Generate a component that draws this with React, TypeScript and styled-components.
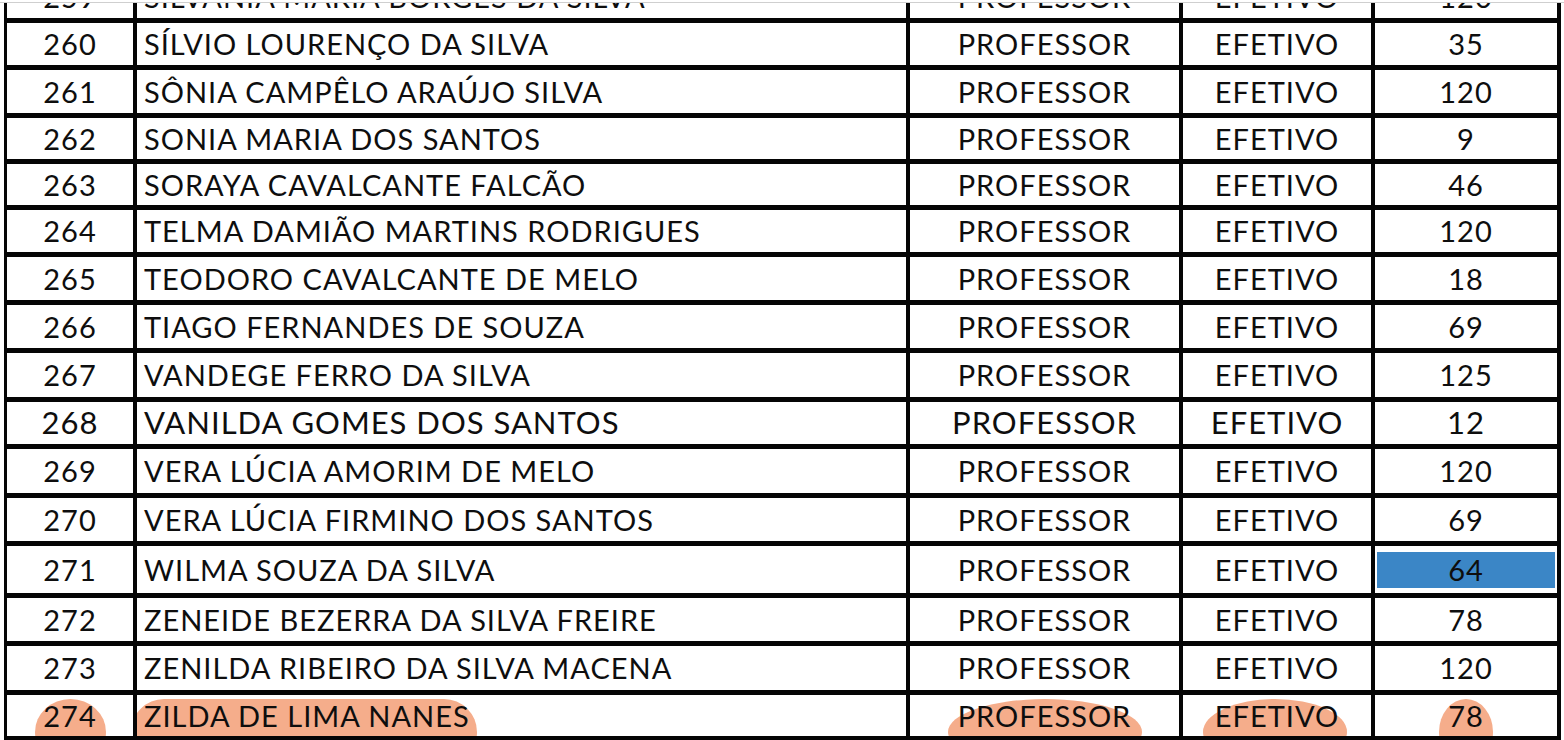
import styled, { createGlobalStyle } from 'styled-components';

const GlobalStyle = createGlobalStyle`
	html, body {
		margin: 0;
		padding: 0;
		background: #ffffff;
	}
	body {
		font-family: Lato, 'Open Sans', 'Liberation Sans', sans-serif;
	}
`;

type RowType = {
	id: string;
	name: string;
	role: string;
	kind: string;
	days: string;
	height: number;
	partial?: boolean;
	large?: boolean;
	filled?: boolean;
	marked?: boolean;
};

const rows: RowType[] = [
	{ id: '259', name: 'SILVANIA MARIA BORGES DA SILVA', role: 'PROFESSOR', kind: 'EFETIVO', days: '120', height: 15, partial: true },
	{ id: '260', name: 'SÍLVIO LOURENÇO DA SILVA', role: 'PROFESSOR', kind: 'EFETIVO', days: '35', height: 42 },
	{ id: '261', name: 'SÔNIA CAMPÊLO ARAÚJO SILVA', role: 'PROFESSOR', kind: 'EFETIVO', days: '120', height: 43 },
	{ id: '262', name: 'SONIA MARIA DOS SANTOS', role: 'PROFESSOR', kind: 'EFETIVO', days: '9', height: 41 },
	{ id: '263', name: 'SORAYA CAVALCANTE FALCÃO', role: 'PROFESSOR', kind: 'EFETIVO', days: '46', height: 41 },
	{ id: '264', name: 'TELMA DAMIÃO MARTINS RODRIGUES', role: 'PROFESSOR', kind: 'EFETIVO', days: '120', height: 42 },
	{ id: '265', name: 'TEODORO CAVALCANTE DE MELO', role: 'PROFESSOR', kind: 'EFETIVO', days: '18', height: 43 },
	{ id: '266', name: 'TIAGO FERNANDES DE SOUZA', role: 'PROFESSOR', kind: 'EFETIVO', days: '69', height: 43 },
	{ id: '267', name: 'VANDEGE FERRO DA SILVA', role: 'PROFESSOR', kind: 'EFETIVO', days: '125', height: 44 },
	{ id: '268', name: 'VANILDA GOMES DOS SANTOS', role: 'PROFESSOR', kind: 'EFETIVO', days: '12', height: 42, large: true },
	{ id: '269', name: 'VERA LÚCIA AMORIM DE MELO', role: 'PROFESSOR', kind: 'EFETIVO', days: '120', height: 44 },
	{ id: '270', name: 'VERA LÚCIA FIRMINO DOS SANTOS', role: 'PROFESSOR', kind: 'EFETIVO', days: '69', height: 43 },
	{ id: '271', name: 'WILMA SOUZA DA SILVA', role: 'PROFESSOR', kind: 'EFETIVO', days: '64', height: 47, filled: true },
	{ id: '272', name: 'ZENEIDE BEZERRA DA SILVA FREIRE', role: 'PROFESSOR', kind: 'EFETIVO', days: '78', height: 43 },
	{ id: '273', name: 'ZENILDA RIBEIRO DA SILVA MACENA', role: 'PROFESSOR', kind: 'EFETIVO', days: '120', height: 44 },
	{ id: '274', name: 'ZILDA DE LIMA NANES', role: 'PROFESSOR', kind: 'EFETIVO', days: '78', height: 41, marked: true },
];

// where the hand-drawn highlight sits inside each cell of the marked row
const marks = [
	{ left: 28, width: 71, round: '50%' },
	{ left: -6, width: 346, round: '36px' },
	{ left: 38, width: 194, round: '50%' },
	{ left: 20, width: 144, round: '50%' },
	{ left: 64, width: 54, round: '50%' },
];

const Page = styled.div`
	padding-top: 2px;
`;

const TopRule = styled.div`
	height: 1px;
	background: #cfcfcf;
`;

const Sheet = styled.div`
	margin-left: 4px;
	width: 1557px;
	box-sizing: border-box;
	display: grid;
	grid-template-columns: 126px 769px 269px 188px 182px;
	grid-template-rows: ${rows.map((r) => `${r.height}px`).join(' ')};
	column-gap: 4px;
	row-gap: 5px;
	padding: 0 4px 5px 3px;
	background: #050505;
`;

const Cell = styled.div<{ $align: 'left' | 'center'; $partial?: boolean }>`
	position: relative;
	isolation: isolate;
	overflow: hidden;
	display: flex;
	align-items: ${(p) => (p.$partial ? 'flex-end' : 'center')};
	justify-content: ${(p) => (p.$align === 'left' ? 'flex-start' : 'center')};
	padding-left: ${(p) => (p.$align === 'left' ? '7px' : '0')};
	background: #ffffff;
`;

const Text = styled.span<{ $large?: boolean }>`
	display: block;
	height: 42px;
	line-height: 41px;
	white-space: nowrap;
	font-size: ${(p) => (p.$large ? '31px' : '29px')};
	letter-spacing: 1px;
	color: #0e0e0e;
`;

const Fill = styled.span`
	position: absolute;
	top: 6px;
	bottom: 5px;
	left: 2px;
	right: 2px;
	background: #3b86c6;
	z-index: -1;
`;

const Mark = styled.span<{ $left: number; $width: number; $round: string }>`
	position: absolute;
	top: 4px;
	left: ${(p) => p.$left}px;
	width: ${(p) => p.$width}px;
	height: 66px;
	border-radius: ${(p) => p.$round};
	background: #f5ad8b;
	z-index: -1;
`;

const App = () => {
	return (
		<Page>
			<GlobalStyle />
			<TopRule />
			<Sheet>
				{rows.map((row) => {
					const values = [row.id, row.name, row.role, row.kind, row.days];
					return values.map((value, i) => (
						<Cell key={`${row.id}-${i}`} $align={i === 1 ? 'left' : 'center'} $partial={row.partial}>
							{row.filled && i === 4 && <Fill />}
							{row.marked && (
								<Mark $left={marks[i].left} $width={marks[i].width} $round={marks[i].round} />
							)}
							<Text $large={row.large}>{value}</Text>
						</Cell>
					));
				})}
			</Sheet>
		</Page>
	);
};

export default App;
